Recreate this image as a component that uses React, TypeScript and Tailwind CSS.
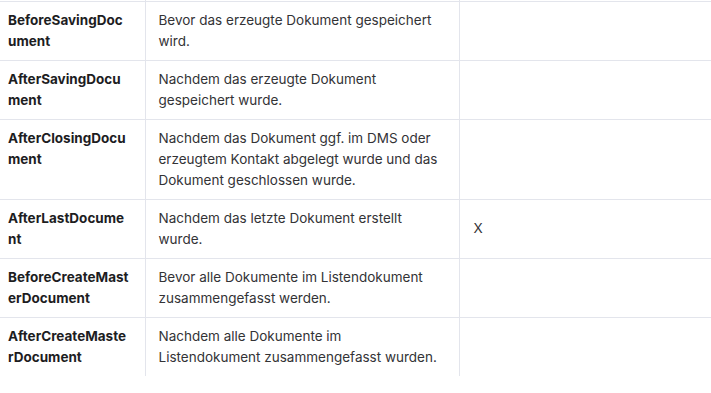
import React from 'react';

const rows = [
  { name: 'BeforeSavingDocument', desc: 'Bevor das erzeugte Dokument gespeichert wird.', mark: '' },
  { name: 'AfterSavingDocument', desc: 'Nachdem das erzeugte Dokument gespeichert wurde.', mark: '' },
  {
    name: 'AfterClosingDocument',
    desc: 'Nachdem das Dokument ggf. im DMS oder erzeugtem Kontakt abgelegt wurde und das Dokument geschlossen wurde.',
    mark: '',
  },
  { name: 'AfterLastDocument', desc: 'Nachdem das letzte Dokument erstellt wurde.', mark: 'X' },
  { name: 'BeforeCreateMasterDocument', desc: 'Bevor alle Dokumente im Listendokument zusammengefasst werden.', mark: '' },
  { name: 'AfterCreateMasterDocument', desc: 'Nachdem alle Dokumente im Listendokument zusammengefasst wurden.', mark: '' },
];

const App = () => {
  return (
    <div className="w-[711px] h-[393px] overflow-hidden bg-white font-[family-name:Inter] text-[13.5px] leading-[21px]">
      <table className="-mt-[20px] -ml-[6px] w-[900px] table-fixed border-collapse">
        <colgroup>
          <col className="w-[151px]" />
          <col className="w-[314px]" />
          <col />
        </colgroup>
        <tbody>
          {/* tail of the row above, scrolled out of view */}
          <tr className="h-[21px]">
            <td />
            <td className="border-l border-[#e3e5ec]" />
            <td className="border-l border-[#e3e5ec]" />
          </tr>
          {rows.map((r) => (
            <tr key={r.name} className="border-t border-[#e3e5ec]">
              <td className="px-[14px] py-[8px] align-top font-bold text-[#1d1d1f] break-all">{r.name}</td>
              <td className="border-l border-[#e3e5ec] pl-[13px] pr-[12.5px] py-[8px] align-top text-[#333336]">{r.desc}</td>
              <td className="border-l border-[#e3e5ec] px-[14px] py-[8px] align-middle text-[#333336]">{r.mark}</td>
            </tr>
          ))}
        </tbody>
      </table>
    </div>
  );
};

export default App;
